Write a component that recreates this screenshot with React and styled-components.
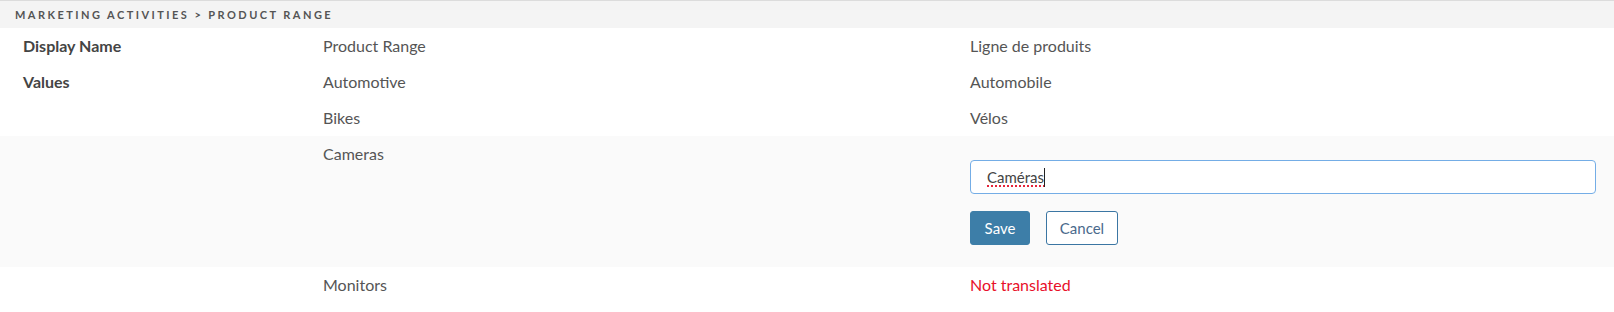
import React from 'react';
import styled, { createGlobalStyle } from 'styled-components';

const GlobalStyle = createGlobalStyle`
  body {
    margin: 0;
    background: #fff;
    font-family: Lato, "Open Sans", sans-serif;
    color: #555;
  }
`;

const rows = [
  { label: 'Display Name', source: 'Product Range', target: 'Ligne de produits' },
  { label: 'Values', source: 'Automotive', target: 'Automobile' },
  { source: 'Bikes', target: 'Vélos' },
  { source: 'Cameras', target: 'Caméras', editing: true },
  { source: 'Monitors', target: null },
];

const Page = styled.div`
  width: 1614px;
  border-top: 1px solid #dcdcdc;
`;

const Breadcrumb = styled.div`
  height: 27px;
  display: flex;
  align-items: center;
  padding-left: 15px;
  background: #f4f4f4;
  font-size: 11px;
  font-weight: 700;
  letter-spacing: 2.45px;
  color: #555;
  text-transform: uppercase;
`;

const Row = styled.div`
  display: grid;
  grid-template-columns: 300px 647px 1fr;
  padding-left: 23px;
  padding-right: 18px;
  background: ${p => (p.$active ? '#fafafa' : '#fff')};
  min-height: 36px;
  padding-bottom: ${p => (p.$active ? '22px' : '0')};
`;

const Cell = styled.div`
  font-size: 16px;
  line-height: 36px;
  color: ${p => (p.$missing ? '#e8102a' : '#555')};
`;

const Label = styled(Cell)`
  font-weight: 700;
  color: #444;
`;

const Editor = styled.div`
  padding-top: 24px;
  display: flex;
  flex-direction: column;
  gap: 17px;
`;

const FakeInput = styled.div`
  height: 34px;
  box-sizing: border-box;
  border: 1px solid #74ade6;
  border-radius: 4px;
  background: #fff;
  padding-left: 16px;
  display: flex;
  align-items: center;
  font-size: 15px;
  color: #444;
`;

const Typed = styled.span`
  text-decoration: underline dotted #e5253a;
  text-decoration-thickness: 1.5px;
  text-underline-offset: 3px;
  border-right: 1px solid #222;
  line-height: 19px;
`;

const Actions = styled.div`
  display: flex;
  gap: 16px;
`;

const Button = styled.button`
  width: ${p => (p.$primary ? '60px' : '72px')};
  height: 34px;
  box-sizing: border-box;
  padding: 0;
  border-radius: 3px;
  border: 1px solid ${p => (p.$primary ? '#3d7ea8' : '#3b76a3')};
  background: ${p => (p.$primary ? '#3d7ea8' : '#fff')};
  color: ${p => (p.$primary ? '#fff' : '#4a6a8c')};
  font-family: Lato, sans-serif;
  font-size: 15px;
  cursor: pointer;
`;

export default function App() {
  return (
    <Page>
      <GlobalStyle />
      <Breadcrumb>Marketing Activities &gt; Product Range</Breadcrumb>
      {rows.map(r => (
        <Row key={r.source} $active={r.editing}>
          {r.label ? <Label>{r.label}</Label> : <Cell />}
          <Cell>{r.source}</Cell>
          {r.editing ? (
            <Editor>
              <FakeInput>
                <Typed>{r.target}</Typed>
              </FakeInput>
              <Actions>
                <Button $primary>Save</Button>
                <Button>Cancel</Button>
              </Actions>
            </Editor>
          ) : (
            <Cell $missing={!r.target}>{r.target || 'Not translated'}</Cell>
          )}
        </Row>
      ))}
    </Page>
  );
}
